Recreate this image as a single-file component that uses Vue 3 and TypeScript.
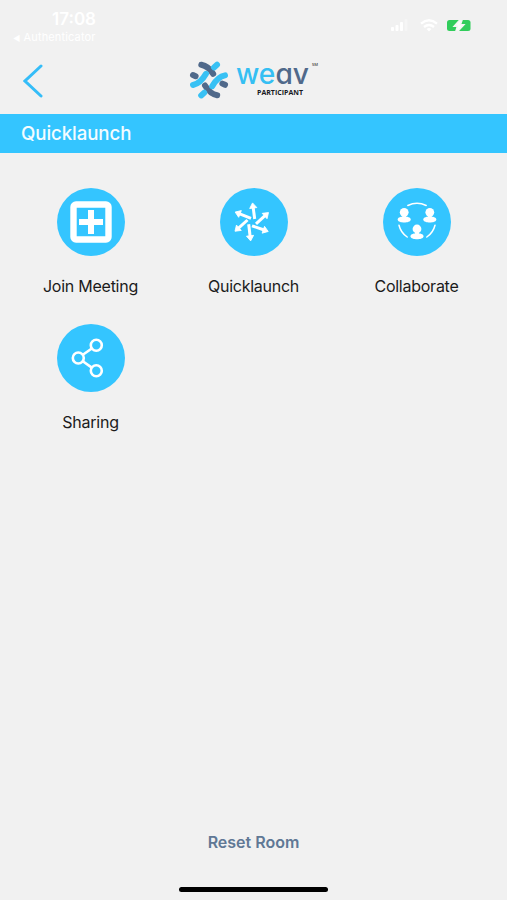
<script setup lang="ts">
interface Tile {
  id: string
  label: string
}

interface Arrow {
  x: number
  y: number
  length: number
  angle: number
}

const tiles: Tile[] = [
  { id: 'join', label: 'Join Meeting' },
  { id: 'launch', label: 'Quicklaunch' },
  { id: 'collaborate', label: 'Collaborate' },
  { id: 'share', label: 'Sharing' },
]

// Base point and tip of each arrow in the pinwheel.
const arrowPoints: number[][] = [
  [34.7, 31, 32.5, 14.5],
  [36, 35.8, 48.8, 24.3],
  [32, 37.8, 48.6, 43.6],
  [28.7, 36.3, 30.7, 53.3],
  [27.5, 32, 14.7, 43.5],
  [31, 30.3, 14.8, 23.9],
]

const arrows: Arrow[] = arrowPoints.map(([x1, y1, x2, y2]) => ({
  x: x1,
  y: y1,
  length: Math.hypot(x2 - x1, y2 - y1),
  angle: (Math.atan2(y2 - y1, x2 - x1) * 180) / Math.PI,
}))

const people: number[][] = [
  [21.2, 20],
  [46.8, 20],
  [34, 36.7],
]
</script>

<template>
  <div class="screen">
    <div class="status">
      <div class="status-left">
        <span class="time">17:08</span>
        <span class="back-app"><span class="tri">◀</span>Authenticator</span>
      </div>
      <div class="status-right">
        <svg width="17" height="12" viewBox="0 0 17 12" fill="#fff">
          <rect x="0" y="8" width="3" height="4" rx="1" />
          <rect x="4.5" y="6" width="3" height="6" rx="1" />
          <rect x="9" y="3" width="3" height="9" rx="1" />
          <rect x="13.5" y="0" width="3" height="12" rx="1" opacity=".35" />
        </svg>
        <svg class="wifi" width="18" height="13" viewBox="0 0 18 13" fill="none" stroke="#fff" stroke-width="2.4">
          <path d="M1 4.6Q9-2 17 4.6" />
          <path d="M4 8Q9 4 14 8" />
          <path d="M6.6 9.9Q9 8.2 11.4 9.9L9 12.6Z" fill="#fff" stroke="none" />
        </svg>
        <svg class="battery" width="24" height="11" viewBox="0 0 24 11">
          <rect width="23.5" height="11" rx="2.5" fill="#31cd5b" />
          <path d="M12.8 0L7.2 6.3H10.4L9 11H11L16.8 4.7H13.4L15 0Z" fill="#f8fff9" stroke="#f3f5f3" stroke-width="1.6" />
        </svg>
      </div>
    </div>

    <header class="nav">
      <button class="back" aria-label="Back">
        <svg width="20" height="34" viewBox="0 0 20 34" fill="none" stroke="#35bdf8" stroke-width="3" stroke-linecap="round">
          <path d="M18 2L2 17L18 32" />
        </svg>
      </button>
      <svg class="logo" width="150" height="60" viewBox="0 0 150 60">
        <g fill="none" stroke-width="6" stroke-linecap="round">
          <g stroke="#50698a">
            <path d="M21.3 14.8C26.5 15.8 30.5 19.5 33.2 23.8" />
            <path d="M13 25L15.6 26.2" />
            <path d="M25 35.5C28 40.5 32 44.3 37.2 45.2" />
            <path d="M42.4 33.6L45 34.8" />
          </g>
          <g stroke="#38c1f4">
            <path d="M37 14.8L34 17.4" />
            <path d="M13 35C19 33.8 23 29 26 23.8" />
            <path d="M45 25.4C39 26.5 35.2 31 32.2 36.2" />
            <path d="M21.2 45.4L24.2 42.8" />
          </g>
        </g>
        <text class="word" x="56" y="34" textLength="73" lengthAdjust="spacingAndGlyphs"><tspan fill="#35bff3">we</tspan><tspan fill="#50698a">av</tspan></text>
        <text class="sub" x="77" y="45.2" textLength="46" lengthAdjust="spacingAndGlyphs">PARTICIPANT</text>
        <text class="mark" x="132" y="16.3" textLength="6" lengthAdjust="spacingAndGlyphs">SM</text>
      </svg>
    </header>

    <h1 class="banner">Quicklaunch</h1>

    <main class="grid">
      <div v-for="tile in tiles" :key="tile.id" class="tile">
        <svg class="disc" width="68" height="68" viewBox="0 0 68 68">
          <circle cx="34" cy="34" r="34" fill="#34c5ff" />
          <g v-if="tile.id === 'join'" fill="none" stroke="#fff">
            <rect x="16.5" y="16.5" width="35" height="35" rx="2.5" stroke-width="6.4" />
            <path d="M34 22V46M22 34H46" stroke-width="6" />
          </g>
          <g v-else-if="tile.id === 'launch'" fill="#fff" stroke="#fff">
            <g v-for="arrow in arrows" :key="arrow.angle" :transform="`translate(${arrow.x} ${arrow.y}) rotate(${arrow.angle})`">
              <line x1="0" y1="0" :x2="arrow.length - 4" y2="0" stroke-width="3" />
              <path :transform="`translate(${arrow.length} 0)`" d="M-.4 0L-5.6-3.6V3.6Z" stroke-width=".8" stroke-linejoin="round" />
            </g>
          </g>
          <g v-else-if="tile.id === 'collaborate'">
            <g fill="none" stroke="#fff" stroke-width="1.5" stroke-linecap="round">
              <path d="M24.8 17.5A21 21 0 0 1 43.2 17.5" />
              <path d="M16 37.2A20 20 0 0 0 24.2 49" />
              <path d="M52 37.2A20 20 0 0 1 43.8 49" />
            </g>
            <g fill="#fff">
              <g v-for="[x, y] in people" :key="x" :transform="`translate(${x} ${y})`">
                <circle cx="0" cy="4.3" r="4.4" />
                <rect x="-1.9" y="6" width="3.8" height="4" />
                <path d="M-6.6 11.5C-6.3 9.3-3 8.5 0 8.5S6.3 9.3 6.6 11.5C6.3 13.8 3 14.5 0 14.5S-6.3 13.8-6.6 11.5Z" />
              </g>
            </g>
          </g>
          <g v-else fill="none" stroke="#fff" stroke-width="2.6">
            <circle cx="39.3" cy="21.3" r="5.5" />
            <circle cx="21.3" cy="34" r="5.5" />
            <circle cx="39.3" cy="46.8" r="5.5" />
            <path d="M25.8 30.8L34.8 24.5M25.8 37.2L34.8 43.6" />
          </g>
        </svg>
        <span class="label">{{ tile.label }}</span>
      </div>
    </main>

    <footer class="footer">
      <button class="reset">Reset Room</button>
      <div class="home-bar"></div>
    </footer>
  </div>
</template>

<style>
body {
  background: #f1f1f1;
}
</style>

<style scoped>
.screen {
  width: 507px;
  height: 900px;
  display: flex;
  flex-direction: column;
  overflow: hidden;
  background: #f1f1f1;
  font-family: Inter, "Liberation Sans", sans-serif;
}
svg {
  display: block;
  flex: none;
}
button {
  border: 0;
  padding: 0;
  background: none;
  font: inherit;
}
.status {
  height: 50px;
  box-sizing: border-box;
  padding: 9px 36px 0 13px;
  display: flex;
  justify-content: space-between;
  color: #fff;
}
.status-left {
  width: 83px;
  display: flex;
  flex-direction: column;
}
.time {
  align-self: flex-end;
  font-size: 17px;
  line-height: 20px;
  font-weight: 600;
}
.back-app {
  font-size: 11px;
  line-height: 16px;
  letter-spacing: 0.15px;
  white-space: nowrap;
}
.tri {
  font-size: 8px;
  margin-right: 3px;
}
.status-right {
  display: flex;
  align-items: flex-start;
  padding-top: 10px;
}
.wifi {
  margin-left: 12px;
}
.battery {
  margin: 1px 0 0 9px;
}
.nav {
  height: 64px;
  display: grid;
  grid-template-columns: 180px 150px 1fr;
}
.back {
  justify-self: start;
  align-self: start;
  padding: 14px 0 0 23px;
}
.word {
  font: 500 28px Inter, sans-serif;
  font-feature-settings: "cv11", "ss03";
}
.sub {
  font: 700 7.6px "Open Sans", sans-serif;
  fill: #17191d;
}
.mark {
  font: 600 4px "Open Sans", sans-serif;
  fill: #444;
}
.banner {
  margin: 0;
  height: 39px;
  padding-left: 21px;
  background: #34c5ff;
  color: #f4fcff;
  font-size: 18.7px;
  line-height: 40px;
  letter-spacing: -0.1px;
  font-weight: 500;
}
.grid {
  display: grid;
  grid-template-columns: repeat(3, 163px);
  grid-auto-rows: 136px;
  justify-content: center;
  padding-top: 35px;
}
.tile {
  display: flex;
  flex-direction: column;
  align-items: center;
}
.label {
  margin-top: 18px;
  color: #1b1b1b;
  font-size: 16px;
  line-height: 24px;
  letter-spacing: -0.25px;
}
.footer {
  margin-top: auto;
  display: flex;
  flex-direction: column;
  align-items: center;
  padding-bottom: 8px;
}
.reset {
  color: #607895;
  font-size: 16px;
  line-height: 24px;
  font-weight: 600;
}
.home-bar {
  margin-top: 33px;
  width: 149px;
  height: 5px;
  border-radius: 3px;
  background: #000;
}
</style>
